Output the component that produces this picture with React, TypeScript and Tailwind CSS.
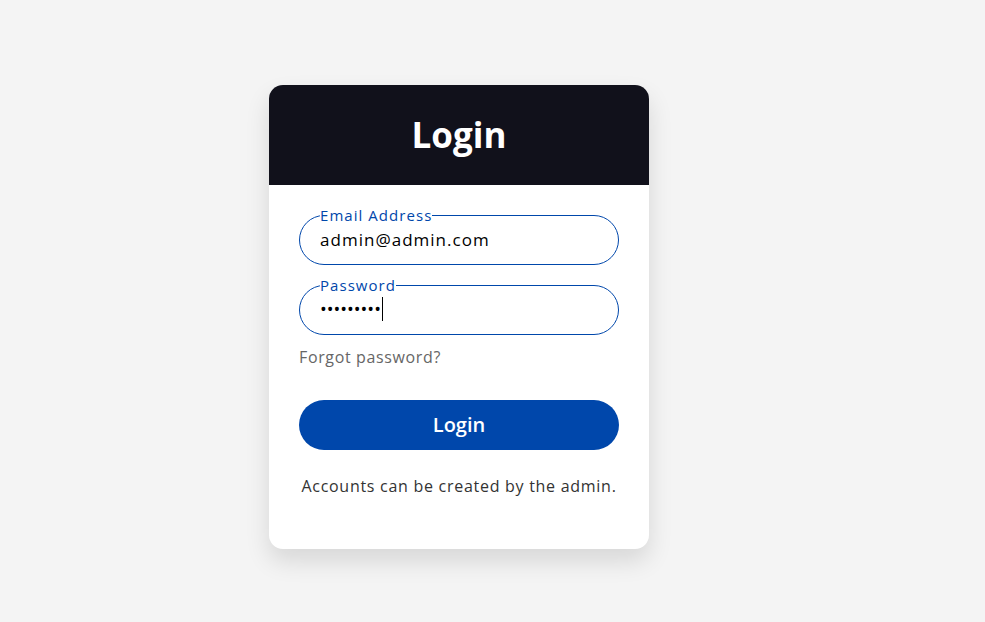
import { useState } from "react";

const font = { fontFamily: '"Open Sans", "DejaVu Sans", sans-serif' };

function Field({ label, children }: { label: string; children: React.ReactNode }) {
  return (
    <fieldset className="border border-[#0047ab] rounded-full px-5 pb-[9px] m-0">
      <legend className="text-[15px] leading-[15px] tracking-[0.07em] text-[#0047ab] px-0">
        {label}
      </legend>
      {children}
    </fieldset>
  );
}

export default function App() {
  const [email, setEmail] = useState("admin@admin.com");

  return (
    <div className="min-h-screen bg-[#f4f4f4] pl-[269px] pt-[85px]" style={font}>
      <div className="w-[380px] bg-white rounded-[14px] overflow-hidden shadow-[0_12px_24px_rgba(0,0,0,0.12)]">
        <div className="h-[100px] bg-[#11111b] flex items-center justify-center">
          <h1 className="text-[35px] font-bold text-white">Login</h1>
        </div>
        <form className="px-[30px] pt-[23px] pb-[51px] flex flex-col">
          <Field label="Email Address">
            <input
              value={email}
              onChange={(e) => setEmail(e.target.value)}
              className="w-full h-[32px] outline-none text-[17px] tracking-[0.06em] text-black bg-transparent"
            />
          </Field>
          <div className="mt-[13px]">
            <Field label="Password">
              <div className="h-[32px] flex items-center text-[18px] text-black">
                <span>•••••••••</span>
                <span className="w-px h-[24px] bg-black ml-[1px]" />
              </div>
            </Field>
          </div>
          <a href="#" className="mt-[10px] text-[16px] tracking-[0.04em] text-[#666] self-start">
            Forgot password?
          </a>
          <button
            type="button"
            className="mt-[31px] h-[50px] rounded-full bg-[#0047ab] text-white text-[20px] font-semibold"
          >
            Login
          </button>
          <p className="mt-[24px] text-center text-[16px] tracking-[0.045em] text-[#333]">
            Accounts can be created by the admin.
          </p>
        </form>
      </div>
    </div>
  );
}
